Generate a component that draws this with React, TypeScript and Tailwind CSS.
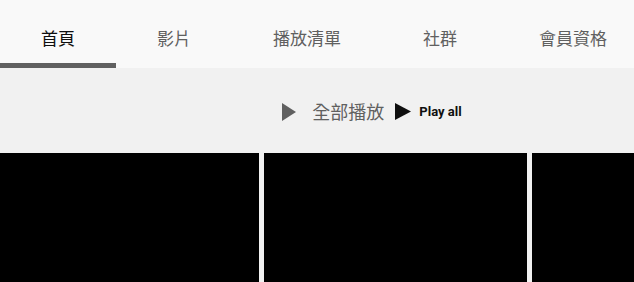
import React from "react";

const tabs = ["首頁", "影片", "播放清單", "社群", "會員資格"];

const Tile = ({ className }: { className: string }) => (
  <div className={`h-[129px] shrink-0 bg-black ${className}`} />
);

const App = () => {
  return (
    <div
      className="h-[282px] w-[634px] overflow-hidden bg-[#f1f1f1]"
      style={{ fontFamily: '"Noto Sans CJK TC", Roboto, sans-serif' }}
    >
      <div className="flex h-[68px] bg-[#f9f9f9]">
        {tabs.map((t, i) => (
          <div
            key={t}
            className={`relative flex shrink-0 items-center px-[41px] pt-[7px] text-[17px] ${
              i === 0 ? "text-[#0f0f0f]" : "text-[#606060]"
            }`}
          >
            {t}
            {i === 0 && (
              <div className="absolute bottom-0 left-0 h-[5px] w-full bg-[#606060]" />
            )}
          </div>
        ))}
      </div>

      <div className="flex h-[85px] items-center justify-center pl-[110px] pt-[2px]">
        <svg width="14" height="18" viewBox="0 0 14 18" className="mr-[16px]">
          <path d="M0 0 L14 9 L0 18 Z" fill="#606060" />
        </svg>
        <span className="text-[18px] text-[#606060]">全部播放</span>
        <svg width="16" height="17" viewBox="0 0 16 17" className="ml-[11px] mr-[8px]">
          <path d="M0 0 L16 8.5 L0 17 Z" fill="#0f0f0f" />
        </svg>
        <span
          className="text-[13px] font-bold text-[#0f0f0f]"
          style={{ fontFamily: "Roboto, sans-serif" }}
        >
          Play all
        </span>
      </div>

      <div className="flex gap-[5px]">
        <Tile className="w-[259px]" />
        <Tile className="w-[263px]" />
        <Tile className="w-[263px]" />
      </div>
    </div>
  );
};

export default App;
